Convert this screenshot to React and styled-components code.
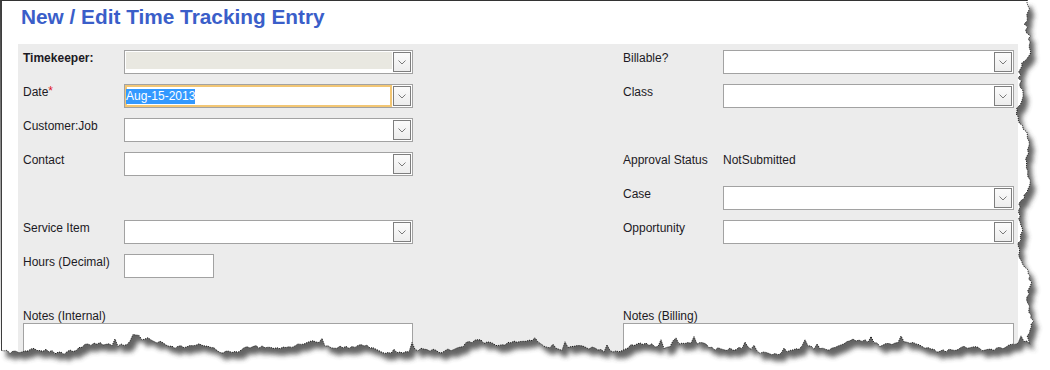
import React from "react";
import styled, { createGlobalStyle } from "styled-components";

const GlobalStyle = createGlobalStyle`
  html, body { margin: 0; padding: 0; background: #fff; }
  body { font-family: "Liberation Sans", Arial, sans-serif; }
`;

const Page = styled.div`
  position: relative;
  width: 1050px;
  height: 370px;
  overflow: hidden;
  background: #fff;
`;

const Frame = styled.div`
  width: 1040px;
  height: 369px;
  border-top: 1px solid #333;
  border-left: 2px solid #3d3d3d;
  background: #fff;
`;

const Title = styled.h1`
  margin: 4px 0 15px 19px;
  font-family: "Liberation Sans", Arial, sans-serif;
  font-weight: bold;
  font-size: 20.8px;
  line-height: 24px;
  color: #3a5ec9;
`;

const Panel = styled.div`
  margin-left: 16px;
  width: 1000px;
  height: 330px;
  background: #ececec;
  box-sizing: border-box;
  padding: 6px 0 0 5px;
  display: grid;
  grid-template-columns: 390px 391px;
  column-gap: 210px;
`;

const Column = styled.div`
  display: flex;
  flex-direction: column;
  gap: 10px;
`;

const Row = styled.div`
  display: grid;
  grid-template-columns: ${(p) => p.$label || 101}px 1fr;
  height: 24px;
`;

const Spacer = styled.div`
  height: 24px;
`;

const Label = styled.div`
  padding-top: 1px;
  font-size: 12px;
  line-height: 14px;
  color: #1c1a24;
  font-weight: ${(p) => (p.$bold ? "bold" : "normal")};
  white-space: nowrap;
`;

const Req = styled.span`
  color: #e0141e;
  position: relative;
  top: -1px;
`;

const Value = styled.div`
  padding-top: 1px;
  font-size: 12px;
  line-height: 14px;
  color: #1c1a24;
`;

const SelectBox = styled.div`
  display: flex;
  align-items: center;
  box-sizing: border-box;
  height: 24px;
  border: 1px solid #a2a2a2;
  background: #fff;
`;

const SelectField = styled.div`
  flex: 1;
  align-self: stretch;
  box-sizing: border-box;
  display: flex;
  align-items: ${(p) => (p.$focus ? "center" : "flex-start")};
  ${(p) =>
    p.$disabled &&
    `
    padding: 1px 1px 3px 1px;
  `}
  ${(p) =>
    p.$focus &&
    `
    border: 2px solid #f2c674;
    margin-right: 1px;
  `}
`;

const DisabledFill = styled.div`
  flex: 1;
  height: 17px;
  background: #e9e8e1;
`;

const Selected = styled.span`
  margin-left: -1px;
  font-size: 12px;
  line-height: 15px;
  background: #3399ff;
  color: #fff;
`;

const DropButton = styled.div`
  box-sizing: border-box;
  width: 18px;
  height: 20px;
  margin-right: 1px;
  border: 1px solid #7e7e7e;
  background: linear-gradient(#fbfbfb, #ededed);
  display: flex;
  align-items: center;
  justify-content: center;
`;

const TextInput = styled.div`
  box-sizing: border-box;
  width: 90px;
  height: 24px;
  border: 1px solid #a2a2a2;
  background: #fff;
`;

const NotesLabel = styled(Label)`
  margin-top: 20px;
  margin-bottom: 0px;
`;

const TextArea = styled.div`
  box-sizing: border-box;
  width: ${(p) => p.$w}px;
  height: 70px;
  border: 1px solid #a2a2a2;
  background: #fff;
`;

const Overlay = styled.svg`
  position: absolute;
  left: 0;
  top: 0;
  pointer-events: none;
`;

function Chevron() {
  return (
    <svg width="8" height="5" viewBox="0 0 8 5">
      <polyline points="0.5,0.5 4,4 7.5,0.5" fill="none" stroke="#7a7a7a" strokeWidth="1" />
    </svg>
  );
}

function Select({ disabled, focus, value }) {
  return (
    <SelectBox>
      <SelectField $disabled={disabled} $focus={focus}>
        {disabled && <DisabledFill />}
        {value && <Selected>{value}</Selected>}
      </SelectField>
      <DropButton>
        <Chevron />
      </DropButton>
    </SelectBox>
  );
}

function makeRng(seed) {
  let s = seed;
  return () => {
    s = (s * 1103515245 + 12345) % 2147483648;
    return s / 2147483648;
  };
}

function TornEdge() {
  const r = makeRng(7);
  const right = [];
  for (let y = 0; y <= 336; y += 3) {
    const x =
      1024 +
      5 * Math.sin(y / 21) +
      3 * Math.sin(y / 7.3 + 1.3) +
      (y > 280 ? (y - 280) * 0.08 : 0) +
      (r() - 0.5) * 3.5;
    right.push([x, y]);
  }
  const bottom = [];
  for (let x = 1030; x >= 0; x -= 3) {
    let y =
      347 +
      4 * Math.sin(x / 29) +
      2.5 * Math.sin(x / 8.7 + 0.5) +
      1.5 * Math.sin(x / 61 + 2) +
      (r() - 0.5) * 3.5;
    if (r() > 0.92) y -= 6;
    bottom.push([x, y]);
  }
  const edge = [...right, ...bottom];
  const paper =
    "M0,0 " + edge.map(([x, y]) => `L${x.toFixed(1)},${y.toFixed(1)}`).join(" ") + " Z";
  const outside = "M-20,-20 H1080 V400 H-20 Z " + paper;
  const line = edge.map(([x, y]) => `${x.toFixed(1)},${y.toFixed(1)}`).join(" ");
  return (
    <Overlay width="1050" height="370" viewBox="0 0 1050 370">
      <defs>
        <filter id="blur" x="-10%" y="-10%" width="120%" height="120%">
          <feGaussianBlur stdDeviation="2.4" />
        </filter>
        <clipPath id="outside">
          <path d={outside} clipRule="evenodd" />
        </clipPath>
      </defs>
      <path d={outside} fill="#fff" fillRule="evenodd" />
      <g clipPath="url(#outside)">
        <path d={paper} transform="translate(5,7)" fill="#3c3c3c" opacity="0.8" filter="url(#blur)" />
      </g>
      <polyline points={line} fill="none" stroke="#111" strokeWidth="1" strokeDasharray="1 1.2" />
    </Overlay>
  );
}

export default function App() {
  return (
    <>
      <GlobalStyle />
      <Page>
        <Frame>
          <Title>New / Edit Time Tracking Entry</Title>
          <Panel>
            <Column>
              <Row>
                <Label $bold>Timekeeper:</Label>
                <Select disabled />
              </Row>
              <Row>
                <Label>
                  Date<Req>*</Req>
                </Label>
                <Select focus value="Aug-15-2013" />
              </Row>
              <Row>
                <Label>Customer:Job</Label>
                <Select />
              </Row>
              <Row>
                <Label>Contact</Label>
                <Select />
              </Row>
              <Spacer />
              <Row>
                <Label>Service Item</Label>
                <Select />
              </Row>
              <Row>
                <Label>Hours (Decimal)</Label>
                <TextInput />
              </Row>
              <div>
                <NotesLabel>Notes (Internal)</NotesLabel>
                <TextArea $w={390} />
              </div>
            </Column>
            <Column>
              <Row $label={100}>
                <Label>Billable?</Label>
                <Select />
              </Row>
              <Row $label={100}>
                <Label>Class</Label>
                <Select />
              </Row>
              <Spacer />
              <Row $label={100}>
                <Label>Approval Status</Label>
                <Value>NotSubmitted</Value>
              </Row>
              <Row $label={100}>
                <Label>Case</Label>
                <Select />
              </Row>
              <Row $label={100}>
                <Label>Opportunity</Label>
                <Select />
              </Row>
              <Spacer />
              <div>
                <NotesLabel>Notes (Billing)</NotesLabel>
                <TextArea $w={391} />
              </div>
            </Column>
          </Panel>
        </Frame>
        <TornEdge />
      </Page>
    </>
  );
}
